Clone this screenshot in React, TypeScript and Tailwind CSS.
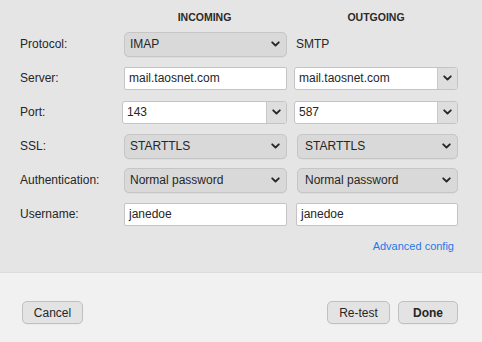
import React from 'react';

const font = { fontFamily: '"Liberation Sans", Arial, sans-serif' };

function Chevron() {
  return (
    <svg width="9" height="6" viewBox="0 0 9 6" className="shrink-0">
      <path d="M1.2 1.3 L4.5 4.5 L7.8 1.3" fill="none" stroke="#262626" strokeWidth="1.8" strokeLinecap="round" strokeLinejoin="round" />
    </svg>
  );
}

function Select({ value, className = '' }: { value: string; className?: string }) {
  return (
    <div className={`h-[25px] flex items-center justify-between pl-[5px] pr-[6px] rounded-[5px] border border-[#c6c6c6] bg-[#d9d9d9] shadow-[0_0.5px_0_rgba(0,0,0,0.08)] ${className}`}>
      <span>{value}</span>
      <Chevron />
    </div>
  );
}

function Input({ value, className = '' }: { value: string; className?: string }) {
  return (
    <div className={`h-[23px] flex items-center pl-[4px] bg-white border border-[#c4c4c4] rounded-[2px] ${className}`}>
      {value}
    </div>
  );
}

function Combo({ value, className = '' }: { value: string; className?: string }) {
  return (
    <div className={`h-[23px] flex bg-white border border-[#c4c4c4] rounded-[3px] overflow-hidden ${className}`}>
      <div className="flex-1 flex items-center pl-[4px]">{value}</div>
      <div className="w-[20px] flex items-center justify-center bg-[#dedede] border-l border-[#c8c8c8]">
        <Chevron />
      </div>
    </div>
  );
}

function Row({ label, children }: { label: string; children: React.ReactNode }) {
  return (
    <div className="h-[34px] grid grid-cols-[95px_165px_164px] gap-x-[7px] items-center">
      <div>{label}</div>
      {children}
    </div>
  );
}

function Button({ children, bold = false, className = '' }: { children: React.ReactNode; bold?: boolean; className?: string }) {
  return (
    <button className={`h-[23px] rounded-[5px] border border-[#c0c0c0] bg-[#e3e3e3] text-[12px] text-[#262626] shadow-[0_0.5px_0_rgba(0,0,0,0.06)] ${bold ? 'font-bold' : ''} ${className}`}>
      {children}
    </button>
  );
}

export default function App() {
  return (
    <div className="w-[482px] h-[342px] flex flex-col text-[12px] text-[#262626] bg-[#f1f1f1]" style={font}>
      <div className="h-[273px] bg-[#e5e5e5] pl-[20px] pt-[8px] border-b border-[#dcdcdc]">
        <div className="h-[19px] grid grid-cols-[95px_165px_164px] gap-x-[7px] items-center text-[10.5px] font-bold text-[#2a2a2a]">
          <div />
          <div className="text-center">INCOMING</div>
          <div className="text-center">OUTGOING</div>
        </div>
        <Row label="Protocol:">
          <Select value="IMAP" className="ml-[2px]" />
          <div className="pl-[2px]">SMTP</div>
        </Row>
        <Row label="Server:">
          <Input value="mail.taosnet.com" className="ml-[2px]" />
          <Combo value="mail.taosnet.com" />
        </Row>
        <Row label="Port:">
          <Combo value="143" />
          <Combo value="587" />
        </Row>
        <Row label="SSL:">
          <Select value="STARTTLS" className="ml-[2px]" />
          <Select value="STARTTLS" className="ml-[3px] pl-[7px]" />
        </Row>
        <Row label="Authentication:">
          <Select value="Normal password" className="ml-[2px]" />
          <Select value="Normal password" className="ml-[3px] pl-[7px]" />
        </Row>
        <Row label="Username:">
          <Input value="janedoe" className="ml-[2px]" />
          <Input value="janedoe" className="ml-[2px]" />
        </Row>
        <div className="h-[30px] flex items-center justify-end pr-[28px]">
          <span className="text-[11px] text-[#1f7ae8]">Advanced config</span>
        </div>
      </div>
      <div className="flex-1 flex items-start justify-between pt-[28px] pl-[22px] pr-[24px]">
        <Button className="w-[61px]">Cancel</Button>
        <div className="flex gap-[8px]">
          <Button className="w-[63px]">Re-test</Button>
          <Button bold className="w-[60px]">Done</Button>
        </div>
      </div>
    </div>
  );
}
